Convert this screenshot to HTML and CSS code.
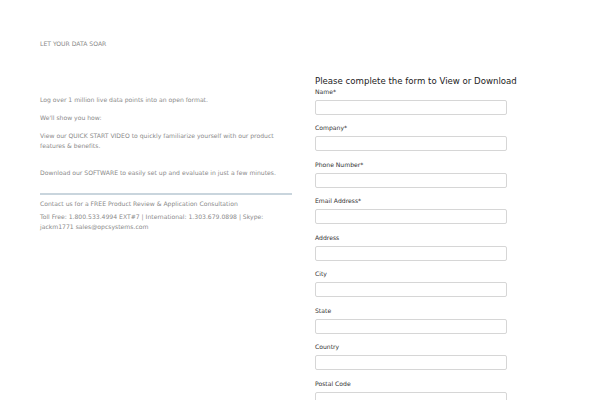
FILE: index.html
```html
<!DOCTYPE html>
<html lang="en">
  <head>
    <meta charset="UTF-8" />
    <title>Let your data soar</title>
    <link rel="stylesheet" href="styles.css">
  </head>
  <body>
    <div class="page">
      <section class="intro">
        <p class="eyebrow">LET YOUR DATA SOAR</p>
        <p class="intro__lead">Log over 1 million live data points into an open format.</p>
        <p>We'll show you how:</p>
        <p>View our QUICK START VIDEO to quickly familiarize yourself with our product features &amp; benefits.</p>
        <p class="intro__download">Download our SOFTWARE to easily set up and evaluate in just a few minutes.</p>
        <hr class="intro__rule" />
        <p class="intro__contact">Contact us for a FREE Product Review &amp; Application Consultation</p>
        <p>Toll Free: 1.800.533.4994 EXT#7 | International: 1.303.679.0898 | Skype: jackm1771 sales@opcsystems.com</p>
      </section>
      <form class="lead-form">
        <h2 class="lead-form__title">Please complete the form to View or Download</h2>
        <label class="field">Name*<input type="text" /></label>
        <label class="field">Company*<input type="text" /></label>
        <label class="field">Phone Number*<input type="text" /></label>
        <label class="field">Email Address*<input type="email" /></label>
        <label class="field">Address<input type="text" /></label>
        <label class="field">City<input type="text" /></label>
        <label class="field">State<input type="text" /></label>
        <label class="field">Country<input type="text" /></label>
        <label class="field">Postal Code<input type="text" /></label>
      </form>
    </div>
  </body>
</html>
```

FILE: styles.css
```css
* {
  box-sizing: border-box;
  margin: 0;
  padding: 0;
}
body {
  background: #fff;
  font-family: "DejaVu Sans", sans-serif;
}
.page {
  display: grid;
  grid-template-columns: 252px 225px;
  column-gap: 23px;
  padding: 39px 0 0 40px;
}

/* Left column */
.intro {
  color: #8a8a8a;
  font-size: 6.1px;
  line-height: 10px;
}
.intro p + p {
  margin-top: 8px;
}
.intro .intro__lead {
  margin-top: 46px;
}
.intro .intro__download {
  margin-top: 17px;
}
.intro__rule {
  border: 0;
  border-top: 2px solid #c9d5dd;
  margin: 15px 0 4px;
}
.intro .intro__contact {
  margin-top: 0;
}
.intro .intro__contact + p {
  margin-top: 3px;
}

/* Form */
.lead-form {
  padding-top: 36px;
  display: flex;
  flex-direction: column;
}
.lead-form__title {
  color: #222;
  font-size: 8.6px;
  font-weight: normal;
  line-height: 12px;
  white-space: nowrap;
}
.field {
  display: flex;
  flex-direction: column;
  color: #333;
  font-size: 6.1px;
  line-height: 10px;
  margin-bottom: 8.45px;
}
.field input {
  width: 192px;
  height: 15px;
  margin-top: 3px;
  border: 1px solid #d6d6d6;
  border-radius: 2px;
  background: #fff;
}
```
